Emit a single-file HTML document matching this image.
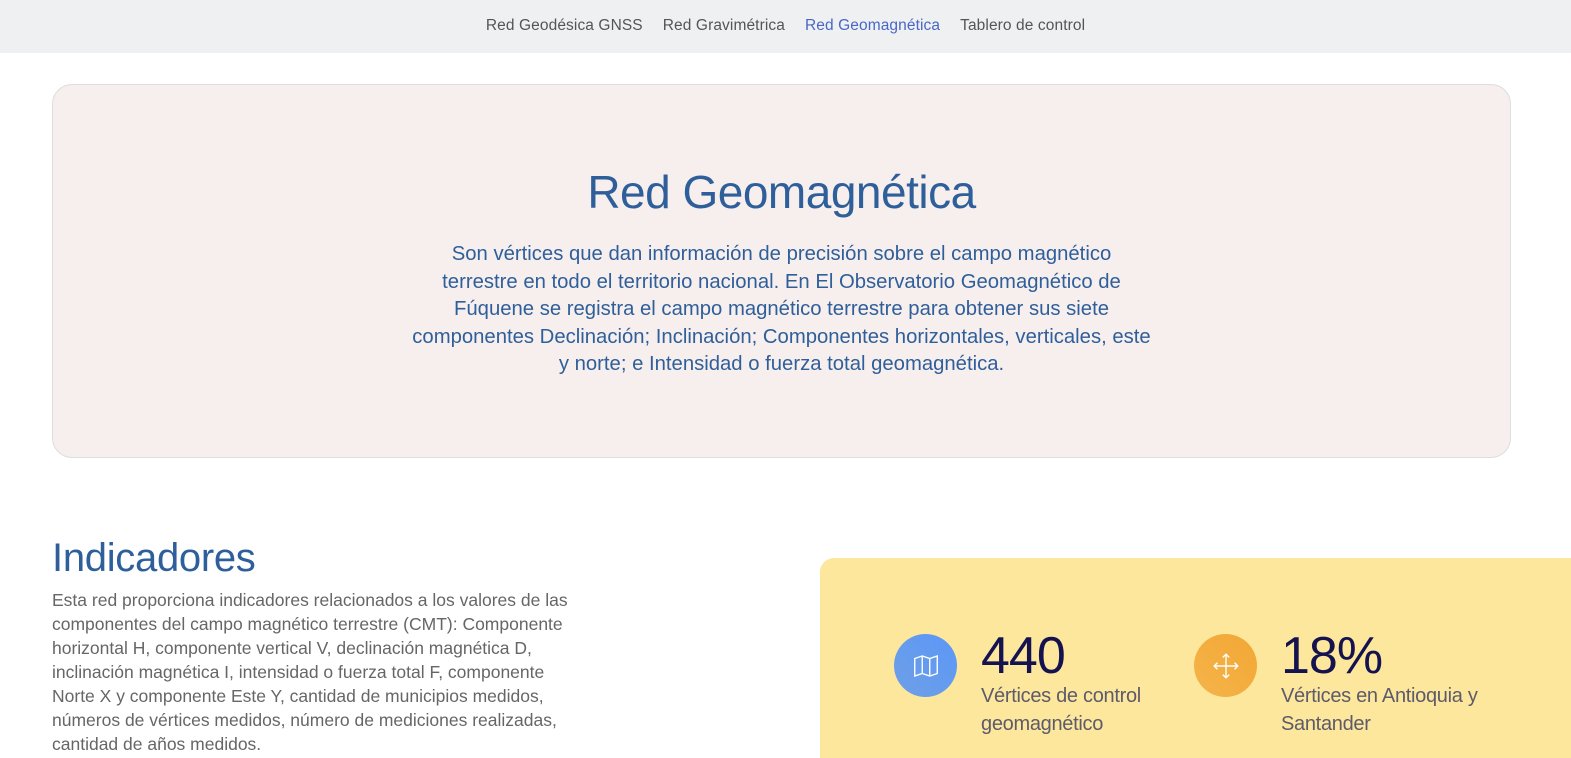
<!DOCTYPE html>
<html><head><meta charset="utf-8"><style>
*{margin:0;padding:0;box-sizing:border-box}
body{width:1571px;height:748px;overflow:hidden;background:#fff;font-family:"Liberation Sans",sans-serif;position:relative}
nav{height:53px;background:#eff0f2;text-align:center;font-size:15.5px;color:#555;padding-top:17px;letter-spacing:0.1px}
nav span{margin:0 10px}
nav .a{color:#4a67c7}
.hero{position:absolute;left:52px;top:84px;width:1459px;height:374px;background:#f7efee;border:1px solid #ddd;border-radius:20px;text-align:center;color:#2f5f9a}
.hero h1{font-weight:normal;font-size:46px;margin-top:80px;letter-spacing:-0.5px}
.hero p{margin:22px auto 0;font-size:20.3px;line-height:27.5px;white-space:nowrap}
h2{position:absolute;left:52px;top:536px;font-weight:normal;font-size:40px;color:#2f5f9a;letter-spacing:-0.3px}
.ind{position:absolute;left:52px;top:588px;font-size:17.5px;line-height:24px;color:#666;white-space:nowrap}
.yb{position:absolute;left:820px;top:558px;width:760px;height:200px;background:#fce79c;border-radius:14px 0 0 0}
.c{position:absolute;width:63px;height:63px;border-radius:50%;top:76px;display:flex;align-items:center;justify-content:center}
.n{position:absolute;top:68px;font-size:52px;color:#14134f;letter-spacing:-1px}
.l{position:absolute;top:124px;font-size:20px;line-height:28px;color:#5d5b6a;letter-spacing:-0.3px}
</style></head><body>
<nav><span>Red Geodésica GNSS</span><span>Red Gravimétrica</span><span class="a">Red Geomagnética</span><span>Tablero de control</span></nav>
<div class="hero"><h1>Red Geomagnética</h1>
<p>Son vértices que dan información de precisión sobre el campo magnético<br>terrestre en todo el territorio nacional. En El Observatorio Geomagnético de<br>Fúquene se registra el campo magnético terrestre para obtener sus siete<br>componentes Declinación; Inclinación; Componentes horizontales, verticales, este<br>y norte; e Intensidad o fuerza total geomagnética.</p></div>
<h2>Indicadores</h2>
<div class="ind">Esta red proporciona indicadores relacionados a los valores de las<br>componentes del campo magnético terrestre (CMT): Componente<br>horizontal H, componente vertical V, declinación magnética D,<br>inclinación magnética I, intensidad o fuerza total F, componente<br>Norte X y componente Este Y, cantidad de municipios medidos,<br>números de vértices medidos, número de mediciones realizadas,<br>cantidad de años medidos.</div>
<div class="yb">
<div class="c" style="left:74px;background:linear-gradient(45deg,#6fa0e6,#5b97f7)"><svg width="30" height="30" viewBox="0 0 24 24" fill="none" stroke="#fff" stroke-width="1.1"><path d="M3 6l6-2 6 2 6-2v14l-6 2-6-2-6 2z"/><path d="M9 4v14M15 6v14"/></svg></div>
<div class="n" style="left:161px">440</div>
<div class="l" style="left:161px">Vértices de control<br>geomagnético</div>
<div class="c" style="left:374px;background:linear-gradient(45deg,#f5b44a,#f2a734)"><svg width="30" height="30" viewBox="0 0 28 28" fill="none" stroke="#fff" stroke-width="1.3"><path d="M14 3v22M3 14h22M11 6l3-3 3 3M11 22l3 3 3-3M6 11l-3 3 3 3M22 11l3 3-3 3"/></svg></div>
<div class="n" style="left:461px">18%</div>
<div class="l" style="left:461px">Vértices en Antioquia y<br>Santander</div>
</div>
</body></html>
